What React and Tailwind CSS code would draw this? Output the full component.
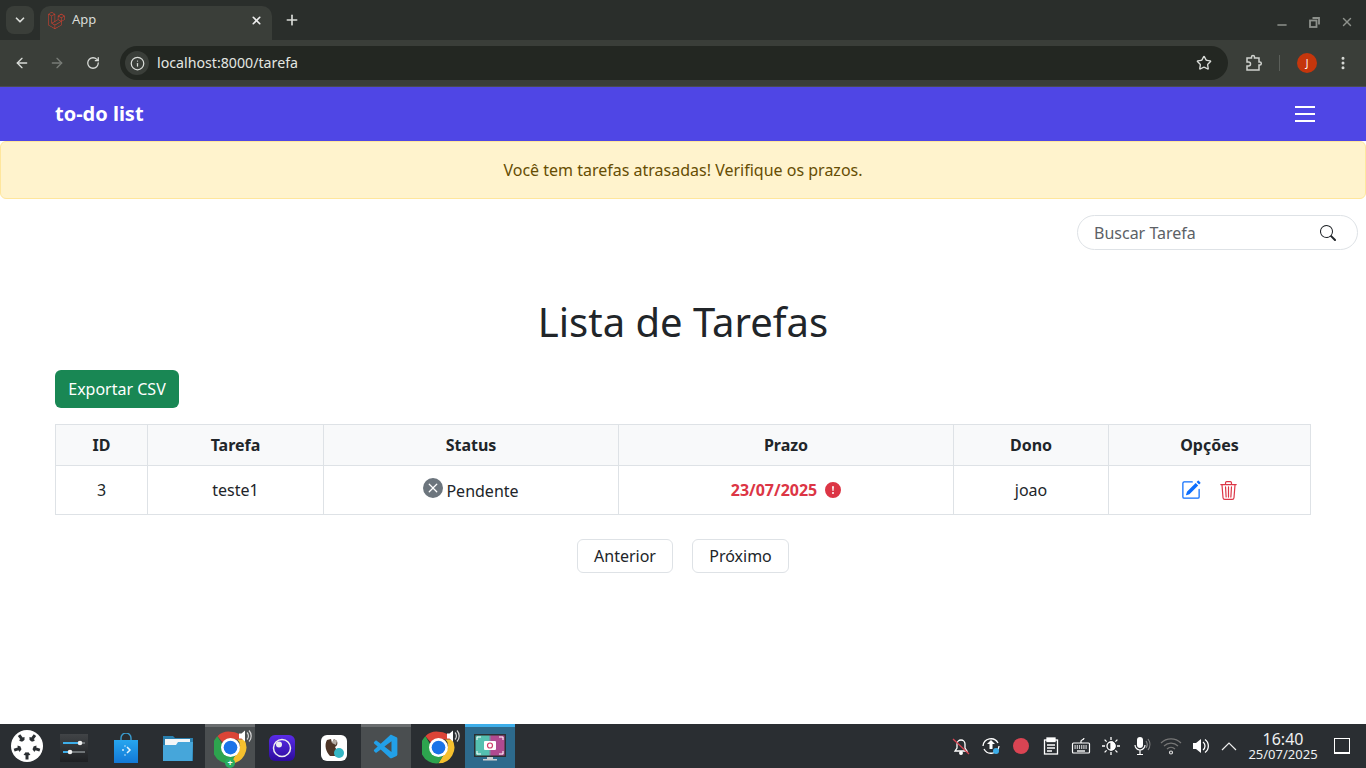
import { ArrowLeft, ArrowRight, ChevronDown, EllipsisVertical, Info, Minus, Plus, RotateCw, Star, X } from 'lucide-react'
import { BsExclamationCircleFill, BsPencilSquare, BsSearch, BsTrash3, BsXCircleFill } from 'react-icons/bs'
import { FaLaravel } from 'react-icons/fa'
import { VscVscode } from 'react-icons/vsc'

// Browser window with the to-do list page, above a KDE-style taskbar.

const COLUMNS = [
  ['ID', 'w-[92px]'],
  ['Tarefa', 'w-[176px]'],
  ['Status', 'w-[295px]'],
  ['Prazo', 'w-[335px]'],
  ['Dono', 'w-[155px]'],
  ['Opções', 'w-[202px]'],
]

const cell = 'border border-[#dee2e6] text-center align-middle'

function ChromeIcon({ size = 33, badge }) {
  return (
    <div className="relative">
      <svg width={size} height={size} viewBox="0 0 48 48">
        <path d="M24 1a23 23 0 0 1 20 11.500H24a11.500 11.500 0 0 0-10 5.800L5 7.500A23 23 0 0 1 24 1z" fill="#db4437" />
        <path d="M44 12.500A23 23 0 0 1 24 47l10-17a11.500 11.500 0 0 0 0-17.500z" fill="#f5c02e" />
        <path d="M24 47A23 23 0 0 1 5 7.500l10 17a11.500 11.500 0 0 0 19 5.500z" fill="#2da44e" />
        <circle cx="24" cy="24" r="13.800" fill="#fff" />
        <circle cx="24" cy="24" r="10" fill="#1a73e8" />
      </svg>
      <svg className="absolute -top-[2px] -right-[6px]" width="15" height="14" viewBox="0 0 15 14">
        <path d="M1 4.500h2.500L7 1.500v11l-3.500-3H1z" fill="#fff" />
        <path d="M9 3.500a5 5 0 0 1 0 7M11 1.500a8 8 0 0 1 0 11" fill="none" stroke="#d5d5d5" strokeWidth="1.200" />
      </svg>
      {badge && (
        <span className="absolute -bottom-[4px] left-1/2 -ml-[5px] w-[10px] h-[10px] rounded-full bg-[#27ae60] text-white text-[9px] leading-[9px] text-center font-bold">+</span>
      )}
    </div>
  )
}

function TaskItem({ children, state }) {
  const look = state === 'open'
    ? 'bg-[#4a4e50] border-t-[3px] border-[#6a6d6f]'
    : state === 'active'
      ? 'bg-[#2d6a8c] border-t-[3px] border-[#3daee9]'
      : 'border-t-[3px] border-transparent'
  return <div className={`w-[50px] h-full flex items-center justify-center ${look}`}>{children}</div>
}

function Tray({ children }) {
  return <div className="w-[30px] h-full flex items-center justify-center">{children}</div>
}

function Taskbar() {
  return (
    <div className="h-[44px] shrink-0 bg-[#2a2e32] flex items-center text-white">
      <div className="ml-[6px] mr-[2px] w-[41px] h-full flex items-center justify-center">
        <svg width="34" height="34" viewBox="0 0 34 34">
          <circle cx="17" cy="17" r="16" fill="#fff" />
          <circle cx="17" cy="17" r="9.500" fill="#2a2e32" />
          {[0, 72, 144, 216, 288].map(a => (
            <rect key={a} x="15.500" y="3.500" width="3" height="5" fill="#2a2e32" transform={`rotate(${a + 36} 17 17)`} />
          ))}
          <g fill="#fff">
            <circle cx="17" cy="17" r="6.500" />
            {[0, 72, 144, 216, 288].map(a => (
              <rect key={a} x="14.500" y="6" width="5" height="6" transform={`rotate(${a} 17 17)`} />
            ))}
          </g>
        </svg>
      </div>
      <div className="flex h-full gap-[2px]">
        <TaskItem>
          <svg width="28" height="28" viewBox="0 0 28 28">
            <defs>
              <linearGradient id="tile" x1="0" y1="0" x2="0" y2="1">
                <stop offset="0" stopColor="#414447" />
                <stop offset="1" stopColor="#1e2023" />
              </linearGradient>
            </defs>
            <rect width="28" height="28" fill="url(#tile)" />
            <path d="M3 9h17M3 18h9" stroke="#3daee9" strokeWidth="2" />
            <path d="M20 9h5M12 18h13" stroke="#6f7477" strokeWidth="2" />
            <circle cx="20" cy="9" r="2.300" fill="#eee" />
            <circle cx="10" cy="18" r="2.300" fill="#eee" />
          </svg>
        </TaskItem>
        <TaskItem>
          <svg width="26" height="30" viewBox="0 0 26 30">
            <defs>
              <linearGradient id="bag" x1="0" y1="0" x2="0" y2="1">
                <stop offset="0" stopColor="#27a6ef" />
                <stop offset="1" stopColor="#1278d6" />
              </linearGradient>
            </defs>
            <path d="M8 8V5a5 5 0 0 1 10 0v3" fill="none" stroke="#3a9ccf" strokeWidth="1.400" />
            <path d="M1 7h24v23H1z" fill="url(#bag)" />
            <path d="M14 14l3 3-3 3" fill="none" stroke="#e4f4fd" strokeWidth="1.500" />
            <circle cx="10" cy="17" r="1" fill="#cfe9fb" />
            <circle cx="12" cy="13" r="0.800" fill="#cfe9fb" />
            <circle cx="12" cy="22" r="0.800" fill="#cfe9fb" />
          </svg>
        </TaskItem>
        <TaskItem>
          <svg width="30" height="26" viewBox="0 0 30 26">
            <path d="M0 1h10l2 2h18v23H0z" fill="#2a7fae" />
            <path d="M2 4h25v7H2z" fill="#f3f6f8" />
            <path d="M0 10h13l2-3h15l-1 19H0z" fill="#46a6da" />
          </svg>
        </TaskItem>
        <TaskItem state="open"><ChromeIcon badge /></TaskItem>
        <TaskItem>
          <div className="w-[26px] h-[26px] rounded-[6px] bg-linear-to-b from-[#5a2be8] to-[#2d0a9e] flex items-center justify-center">
            <svg width="20" height="20" viewBox="0 0 20 20">
              <circle cx="10" cy="10" r="8.500" fill="none" stroke="#eee" strokeWidth="1.500" />
              <circle cx="7" cy="6.500" r="3" fill="#eee" />
            </svg>
          </div>
        </TaskItem>
        <TaskItem>
          <div className="w-[26px] h-[26px] rounded-[6px] bg-white flex items-center justify-center">
            <svg width="22" height="22" viewBox="0 0 22 22">
              <path d="M4 3C1 8 3 15 7 19h6c2-3 1-6-1-9 2-1 3-3 2-6l-3-2-2 4-1-4z" fill="#4d3527" />
              <path d="M9 6l2-4 3 2-1 4z" fill="#b5aca4" />
              <circle cx="16" cy="16" r="5" fill="#35b6c4" />
            </svg>
          </div>
        </TaskItem>
        <TaskItem state="open"><VscVscode size={29} color="#22a0e8" /></TaskItem>
        <TaskItem><ChromeIcon /></TaskItem>
        <TaskItem state="active">
          <svg width="34" height="30" viewBox="0 0 34 30">
            <defs>
              <linearGradient id="screen" x1="0" y1="0" x2="1" y2="0">
                <stop offset="0.450" stopColor="#55c0b0" />
                <stop offset="0.550" stopColor="#b04a90" />
              </linearGradient>
            </defs>
            <rect x="1" y="1" width="32" height="23" fill="#2b2f33" />
            <rect x="2.500" y="2.500" width="29" height="20" fill="url(#screen)" />
            <path d="M4 7V4h4M26 4h4v3M30 18v3h-4M8 21H4v-3" fill="none" stroke="#fff" strokeWidth="1" />
            <rect x="11" y="8" width="12" height="9" rx="1" fill="#fff" />
            <circle cx="17" cy="12.500" r="2.500" fill="none" stroke="#d0406a" strokeWidth="1.200" />
            <path d="M14 24h6v2h4v1.500H10V26h4z" fill="#c9cdd0" />
          </svg>
        </TaskItem>
      </div>

      <div className="ml-auto flex h-full items-center">
        <Tray>
          <svg width="18" height="18" viewBox="0 0 18 18" fill="none" stroke="#fff" strokeWidth="1.300">
            <path d="M3 14h12l-2-3V7a4 4 0 0 0-8 0v4z" />
            <circle cx="9" cy="16" r="1.300" fill="#fff" />
            <path d="M1 2l16 15" stroke="#da4453" />
          </svg>
        </Tray>
        <Tray>
          <svg width="20" height="20" viewBox="0 0 20 20" fill="none" stroke="#fff" strokeWidth="1.300">
            <path d="M2 10a8 8 0 0 1 15-3M18 10a8 8 0 0 1-15 3" />
            <path d="M10 4l4 4h-2.500v5h-3V8H6z" fill="#fff" stroke="none" />
            <circle cx="15" cy="15" r="3" fill="#3daee9" stroke="none" />
          </svg>
        </Tray>
        <Tray><span className="w-[16px] h-[16px] rounded-full bg-[#da4453]" /></Tray>
        <Tray>
          <svg width="16" height="18" viewBox="0 0 16 18" fill="none" stroke="#fff" strokeWidth="1.300">
            <rect x="1.500" y="3" width="13" height="14" />
            <rect x="4" y="1" width="8" height="3.500" fill="#fff" />
            <path d="M4 8h8M4 11h8M4 14h5" />
          </svg>
        </Tray>
        <Tray>
          <svg width="20" height="18" viewBox="0 0 20 18" fill="none" stroke="#fff" strokeWidth="1.200">
            <rect x="1.500" y="6" width="17" height="10" rx="1" />
            <path d="M3.500 9h13M3.500 11h13" strokeDasharray="1.200 1" strokeWidth="1.400" />
            <path d="M6 14h8" strokeWidth="1.400" />
            <path d="M10 6V4c0-1 3-1 3-3" />
          </svg>
        </Tray>
        <Tray>
          <svg width="18" height="18" viewBox="0 0 18 18" stroke="#fff" strokeWidth="1.300">
            <circle cx="9" cy="9" r="4" fill="#2a2e32" />
            <path d="M9 5a4 4 0 0 1 0 8z" fill="#fff" />
            <path d="M9 0v3M9 15v3M0 9h3M15 9h3M2.600 2.600l2 2M13.400 13.400l2 2M2.600 15.400l2-2M13.400 4.600l2-2" />
          </svg>
        </Tray>
        <Tray>
          <svg width="20" height="20" viewBox="0 0 20 20" fill="none">
            <rect x="6" y="1" width="6" height="11" rx="3" fill="#fff" />
            <path d="M4 9a5 5 0 0 0 10 0M9 14v4M6 18.500h6" stroke="#fff" strokeWidth="1.200" />
            <path d="M15 5a6 6 0 0 1 0 7M17 3a9 9 0 0 1 0 11" stroke="#888" strokeWidth="1.100" />
          </svg>
        </Tray>
        <Tray>
          <svg width="22" height="18" viewBox="0 0 22 18" fill="none" stroke="#777" strokeWidth="1.200">
            <path d="M1 6a14 14 0 0 1 20 0M4 9a10 10 0 0 1 14 0M7 12a6 6 0 0 1 8 0" />
            <circle cx="11" cy="15.500" r="1.500" stroke="#ddd" />
          </svg>
        </Tray>
        <Tray>
          <svg width="18" height="18" viewBox="0 0 18 18" fill="none">
            <path d="M1 6h3l5-4v14l-5-4H1z" fill="#fff" />
            <path d="M11 5a5 5 0 0 1 0 8M13 2.500a8 8 0 0 1 0 13" stroke="#fff" strokeWidth="1.300" />
          </svg>
        </Tray>
        <div className="w-[26px] h-full flex items-center justify-center">
          <svg width="16" height="9" viewBox="0 0 16 9" fill="none" stroke="#eee" strokeWidth="1.200"><path d="M1 8l7-7 7 7" /></svg>
        </div>
        <div className="w-[70px] ml-[6px] pt-[1px] text-center text-[#eff0f1]">
          <div className="text-[16px] leading-[15px]">16:40</div>
          <div className="text-[13px] leading-[14px] whitespace-nowrap">25/07/2025</div>
        </div>
        <div className="w-[48px] h-full flex items-center justify-center">
          <div className="w-[16px] h-[16px] border border-white border-b-[2px]" />
        </div>
      </div>
    </div>
  )
}

function BrowserChrome() {
  return (
    <div className="shrink-0 bg-[#2a2e2b] text-[#d9dcd8]">
      <div className="h-[40px] flex items-start pt-[6px]">
        <div className="ml-[6px] w-[28px] h-[28px] rounded-[8px] bg-[#3a3e39] flex items-center justify-center">
          <ChevronDown size={14} strokeWidth={3} />
        </div>
        <div className="ml-[6px] w-[232px] h-[34px] rounded-t-[10px] bg-[#3a3e39] flex items-center px-[8px] pb-[6px]">
          <FaLaravel size={17} color="#e0402f" />
          <span className="ml-[7px] text-[13px]">App</span>
          <X size={13} strokeWidth={3} className="ml-auto mr-[1px] text-[#eee]" />
        </div>
        <Plus size={16} strokeWidth={2.500} className="ml-[12px] mt-[6px]" />
        <div className="ml-auto flex items-center text-[#8d918c] pt-[6px]">
          <Minus size={14} strokeWidth={2.500} className="mr-[20px] mt-[6px]" />
          <svg width="11" height="11" viewBox="0 0 11 11" fill="none" stroke="currentColor" strokeWidth="1.800" className="mr-[20px]">
            <rect x="1" y="3.500" width="6.500" height="6.500" />
            <path d="M3.500 1H10v6.500" />
          </svg>
          <X size={14} strokeWidth={2.500} className="mr-[12px]" />
        </div>
      </div>
      <div className="h-[46px] bg-[#3a3e39] flex items-center">
        <ArrowLeft size={16} className="ml-[14px]" />
        <ArrowRight size={16} className="ml-[19px] text-[#787c77]" />
        <RotateCw size={14} strokeWidth={2.200} className="ml-[21px]" />
        <div className="ml-[20px] w-[1108px] h-[34px] rounded-full bg-[#232722] flex items-center pl-[5px] text-[14.2px]">
          <span className="w-[24px] h-[24px] rounded-full bg-[#3a3e39] flex items-center justify-center">
            <Info size={15} />
          </span>
          <span className="ml-[8px] text-[#e3e6e1]">localhost:8000/tarefa</span>
          <Star size={16} strokeWidth={2} className="ml-auto mr-[16px]" />
        </div>
        <svg width="18" height="18" viewBox="0 0 18 18" fill="none" stroke="#cfd2ce" strokeWidth="1.500" className="ml-[17px]">
          <path d="M2 4h4.500V3a1.500 1.500 0 0 1 3 0v1H14v4h.800a1.500 1.500 0 0 1 0 3H14v5H2v-4h1.500a2 2 0 0 0 0-4H2z" />
        </svg>
        <span className="ml-[16px] w-px h-[16px] bg-[#5b5f5a]" />
        <span className="ml-[17px] w-[20px] h-[20px] rounded-full bg-[#c5360c] text-white text-[10px] flex items-center justify-center">J</span>
        <EllipsisVertical size={16} strokeWidth={2.500} className="ml-[18px]" />
      </div>
      <div className="h-px bg-[#4a4b52]" />
    </div>
  )
}

export default function App() {
  return (
    <div className="w-[1366px] h-[768px] overflow-hidden flex flex-col bg-white font-['Noto_Sans',sans-serif] text-[#212529]">
      <BrowserChrome />

      <div className="flex-1 min-h-0 overflow-hidden">
        <nav className="h-[54px] bg-[#4f46e5] flex items-center justify-between pl-[55px] pr-[51px] text-white">
          <span className="text-[20px] font-bold">to-do list</span>
          <svg width="20" height="16" viewBox="0 0 20 16" stroke="#fff" strokeWidth="2">
            <path d="M0 1h20M0 8h20M0 15h20" />
          </svg>
        </nav>

        <div className="h-[58px] bg-[#fff3cd] border border-[#ffe69c] rounded-[6px] flex items-center justify-center text-[#664d03]">
          Você tem tarefas atrasadas! Verifique os prazos.
        </div>

        <div className="mt-[16px] flex justify-end pr-[8px]">
          <div className="w-[281px] h-[35px] border border-[#dee2e6] rounded-full flex items-center pl-[16px] pr-[21px] text-[#5c6166]">
            <span>Buscar Tarefa</span>
            <BsSearch size={16} className="ml-auto text-[#212529]" />
          </div>
        </div>

        <main className="px-[55px]">
          <h1 className="mt-[48px] text-[40px] leading-[48px] text-center">Lista de Tarefas</h1>

          <button className="mt-[24px] h-[38px] w-[124px] rounded-[6px] bg-[#198754] text-white">Exportar CSV</button>

          <table className="mt-[16px] w-[1255px] table-fixed border-collapse">
            <thead>
              <tr className="h-[41px]">
                {COLUMNS.map(([label, width]) => (
                  <th key={label} className={`${cell} ${width} bg-[#f8f9fa] font-bold`}>{label}</th>
                ))}
              </tr>
            </thead>
            <tbody>
              <tr className="h-[49px]">
                <td className={cell}>3</td>
                <td className={cell}>teste1</td>
                <td className={cell}>
                  <span className="inline-flex items-center gap-[3px]">
                    <BsXCircleFill size={20} className="-mt-[3px] text-[#6c757d]" />
                    <span className="mt-[3px]">Pendente</span>
                  </span>
                </td>
                <td className={cell}>
                  <span className="inline-flex items-center gap-[8px] font-bold text-[#dc3545]">
                    23/07/2025
                    <BsExclamationCircleFill size={16} />
                  </span>
                </td>
                <td className={cell}>joao</td>
                <td className={cell}>
                  <span className="inline-flex items-center gap-[18px] -mt-[3px] align-middle">
                    <BsPencilSquare size={20} className="text-[#0d6efd]" />
                    <BsTrash3 size={19} className="text-[#dc3545]" />
                  </span>
                </td>
              </tr>
            </tbody>
          </table>

          <div className="mt-[24px] flex justify-center gap-[19px]">
            <button className="w-[96px] h-[34px] border border-[#dee2e6] rounded-[6px]">Anterior</button>
            <button className="w-[97px] h-[34px] border border-[#dee2e6] rounded-[6px]">Próximo</button>
          </div>
        </main>
      </div>

      <Taskbar />
    </div>
  )
}
